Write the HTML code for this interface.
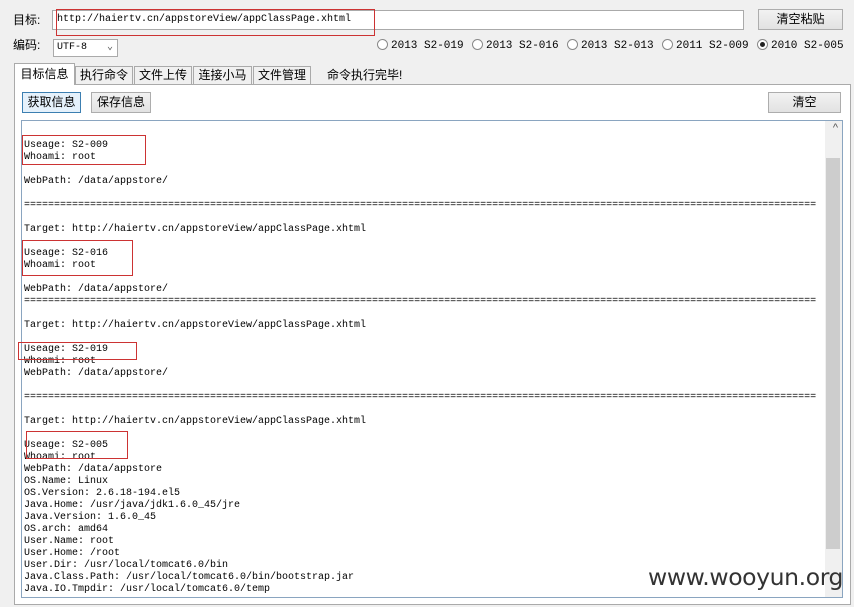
<!DOCTYPE html>
<html><head><meta charset="utf-8"><style>
body{margin:0;width:854px;height:607px;background:#f0f0f0;position:relative;overflow:hidden;font-family:"Liberation Sans","Noto Sans CJK SC",sans-serif;font-size:12px;color:#000}
.a{position:absolute}
.btn{position:absolute;background:linear-gradient(#f2f2f2,#e2e2e2);border:1px solid #adadad;text-align:center;font-size:12px;box-sizing:border-box}
.mono{font-family:"Liberation Mono","Noto Sans CJK SC",monospace}
.radio{position:absolute;top:39px;font-size:11px;white-space:nowrap}
.radio i{display:inline-block;width:11px;height:11px;border:1px solid #888;border-radius:50%;background:#fff;vertical-align:-2px;margin-right:3px;box-sizing:border-box;position:relative}
.tab{position:absolute;top:66px;height:18px;border:1px solid #aaa;border-bottom:none;background:#f0f0f0;font-size:12px;line-height:17px;text-align:center;box-sizing:border-box}
.red{position:absolute;border:1px solid #c33}
pre{margin:0;font-size:10px;line-height:12px}
</style></head><body>
<div class="a" style="left:13px;top:11px">目标:</div>
<div class="a mono" style="left:52px;top:10px;width:692px;height:20px;background:#fff;border:1px solid #aaa;box-sizing:border-box;font-size:10px;line-height:18px;padding-left:4px">http://haiertv.cn/appstoreView/appClassPage.xhtml</div>
<div class="btn" style="left:758px;top:9px;width:85px;height:21px;line-height:19px">清空粘贴</div>
<div class="a" style="left:13px;top:36px">编码:</div>
<div class="a mono" style="left:53px;top:39px;width:65px;height:18px;background:#fff;border:1px solid #aaa;box-sizing:border-box;font-size:10px;line-height:16px;padding-left:3px">UTF-8 <span style="position:absolute;right:4px;color:#555">⌄</span></div>
<div class="radio mono" style="left:377px"><i></i>2013 S2-019</div>
<div class="radio mono" style="left:472px"><i></i>2013 S2-016</div>
<div class="radio mono" style="left:567px"><i></i>2013 S2-013</div>
<div class="radio mono" style="left:662px"><i></i>2011 S2-009</div>
<div class="radio mono" style="left:757px"><i><b style="position:absolute;left:2px;top:2px;width:5px;height:5px;border-radius:50%;background:#222"></b></i>2010 S2-005</div>
<div class="a" style="left:14px;top:84px;width:837px;height:521px;border:1px solid #aaa;background:#fff;box-sizing:border-box"></div>
<div class="tab" style="left:14px;top:63px;height:22px;width:61px;background:#fff;border-color:#aaa;line-height:20px">目标信息</div>
<div class="tab" style="left:75px;width:58px">执行命令</div>
<div class="tab" style="left:134px;width:58px">文件上传</div>
<div class="tab" style="left:193px;width:59px">连接小马</div>
<div class="tab" style="left:253px;width:58px">文件管理</div>
<div class="a" style="left:327px;top:66px">命令执行完毕!</div>
<div class="btn" style="left:22px;top:92px;width:59px;height:21px;line-height:19px;border-color:#3c7fb1;background:#e5f1fb">获取信息</div>
<div class="btn" style="left:91px;top:92px;width:60px;height:21px;line-height:19px">保存信息</div>
<div class="btn" style="left:768px;top:92px;width:73px;height:21px;line-height:19px">清空</div>
<div class="a" style="left:21px;top:120px;width:822px;height:478px;border:1px solid #8aa5c0;background:#fff;box-sizing:border-box;overflow:hidden">
<div class="a" style="right:0;top:0;width:17px;height:476px;background:#f0f0f0"></div>
<div class="a" style="right:2px;top:37px;width:14px;height:391px;background:#cdcdcd"></div>
<div class="a" style="right:4px;top:1px;color:#555;font-size:11px">^</div>
<pre class="a mono" style="left:2px;top:19px">Useage: S2-009
Whoami: root

WebPath: /data/appstore/

====================================================================================================================================

Target: http://haiertv.cn/appstoreView/appClassPage.xhtml

Useage: S2-016
Whoami: root

WebPath: /data/appstore/
====================================================================================================================================

Target: http://haiertv.cn/appstoreView/appClassPage.xhtml

Useage: S2-019
Whoami: root
WebPath: /data/appstore/

====================================================================================================================================

Target: http://haiertv.cn/appstoreView/appClassPage.xhtml

Useage: S2-005
Whoami: root
WebPath: /data/appstore
OS.Name: Linux
OS.Version: 2.6.18-194.el5
Java.Home: /usr/java/jdk1.6.0_45/jre
Java.Version: 1.6.0_45
OS.arch: amd64
User.Name: root
User.Home: /root
User.Dir: /usr/local/tomcat6.0/bin
Java.Class.Path: /usr/local/tomcat6.0/bin/bootstrap.jar
Java.IO.Tmpdir: /usr/local/tomcat6.0/temp</pre>
</div>
<div class="red" style="left:56px;top:9px;width:317px;height:25px"></div>
<div class="red" style="left:22px;top:135px;width:122px;height:28px"></div>
<div class="red" style="left:22px;top:240px;width:109px;height:34px"></div>
<div class="red" style="left:18px;top:342px;width:117px;height:16px"></div>
<div class="red" style="left:26px;top:431px;width:100px;height:26px"></div>
<div class="a" style="left:648px;top:563px;font-size:23.5px;color:#333;font-family:'DejaVu Sans',sans-serif;letter-spacing:-0.4px">www.wooyun.org</div>
</body></html>
